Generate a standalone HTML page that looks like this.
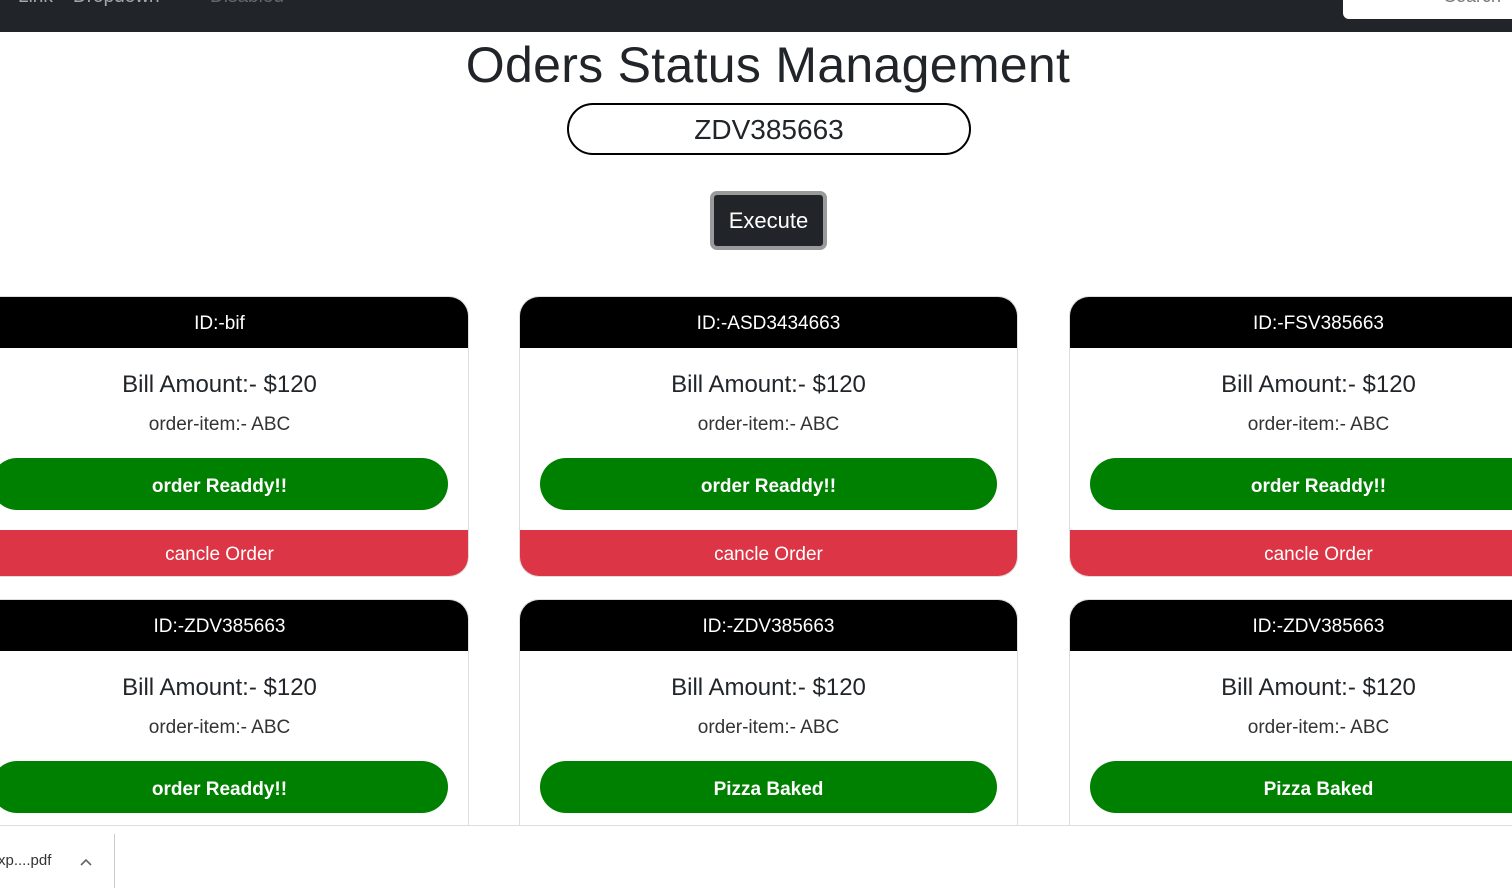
<!DOCTYPE html>
<html><head><style>
body{margin:0;width:1512px;height:887px;overflow:hidden;position:relative;font-family:"Liberation Sans",sans-serif;background:#fff;color:#212529}
.nav{position:absolute;left:0;top:0;width:1512px;height:32px;background:#212529}
.nav span{position:absolute;top:-14px;font-size:19px;color:rgba(255,255,255,.6)}
.search{position:absolute;left:1343px;top:-10px;width:180px;height:29px;background:#fff;border-radius:6px}
.search span{position:absolute;right:22px;top:-4px;color:#777;font-size:18px}
h1{position:absolute;left:0;width:1536px;top:36px;margin:0;text-align:center;font-size:50px;font-weight:500;letter-spacing:.3px}
.inp{position:absolute;left:567px;top:103px;width:400px;height:48px;border:2px solid #000;border-radius:26px;text-align:center;font-size:28px;line-height:50px}
.btn{position:absolute;left:710px;top:191px;width:109px;height:51px;background:#212529;border:4px solid #9a9a9a;border-radius:7px;color:#fff;text-align:center;font-size:22px;line-height:51px}
.card{position:absolute;width:497px;border:1px solid #ddd;border-radius:20px;overflow:hidden;background:#fff;height:279px}
.hd{height:51px;background:#000;color:#fff;text-align:center;font-size:19px;line-height:54px}
.bill{position:absolute;top:74px;width:100%;text-align:center;font-size:24px}
.item{position:absolute;top:117px;width:100%;text-align:center;font-size:19px;color:#333}
.g{position:absolute;left:20px;right:20px;top:161px;height:52px;background:#008000;border-radius:26px;color:#fff;font-weight:bold;font-size:19px;text-align:center;line-height:58px}
.r{position:absolute;left:0;right:0;top:233px;height:47px;background:#dc3545;color:#fff;font-size:19px;text-align:center;line-height:49px}
.bar{position:absolute;left:0;top:825px;width:1512px;height:62px;background:#fff;border-top:1px solid #ddd}
</style></head><body>
<div class="nav"><span style="left:18px">Link</span><span style="left:73px">Dropdown</span><span style="left:210px;color:rgba(255,255,255,.3)">Disabled</span>
<div class="search"><span>Search</span></div></div>
<h1>Oders Status Management</h1>
<div class="inp">ZDV385663</div>
<div class="btn">Execute</div>

<div class="card" style="left:-30px;top:296px"><div class="hd">ID:-bif</div><div class="bill">Bill Amount:- $120</div><div class="item">order-item:- ABC</div><div class="g">order Readdy!!</div><div class="r">cancle Order</div></div>
<div class="card" style="left:519px;top:296px"><div class="hd">ID:-ASD3434663</div><div class="bill">Bill Amount:- $120</div><div class="item">order-item:- ABC</div><div class="g">order Readdy!!</div><div class="r">cancle Order</div></div>
<div class="card" style="left:1069px;top:296px"><div class="hd">ID:-FSV385663</div><div class="bill">Bill Amount:- $120</div><div class="item">order-item:- ABC</div><div class="g">order Readdy!!</div><div class="r">cancle Order</div></div>

<div class="card" style="left:-30px;top:599px"><div class="hd">ID:-ZDV385663</div><div class="bill">Bill Amount:- $120</div><div class="item">order-item:- ABC</div><div class="g">order Readdy!!</div><div class="r">cancle Order</div></div>
<div class="card" style="left:519px;top:599px"><div class="hd">ID:-ZDV385663</div><div class="bill">Bill Amount:- $120</div><div class="item">order-item:- ABC</div><div class="g">Pizza Baked</div><div class="r">cancle Order</div></div>
<div class="card" style="left:1069px;top:599px"><div class="hd">ID:-ZDV385663</div><div class="bill">Bill Amount:- $120</div><div class="item">order-item:- ABC</div><div class="g">Pizza Baked</div><div class="r">cancle Order</div></div>

<div class="bar">
<span style="position:absolute;left:-2px;top:26px;font-size:15px;color:#333">xp....pdf</span>
<svg style="position:absolute;left:79px;top:31px" width="14" height="10"><path d="M2 8 L7 3 L12 8" stroke="#666" stroke-width="1.6" fill="none"/></svg>
<div style="position:absolute;left:114px;top:8px;width:1px;height:54px;background:#ccc"></div>
</div>
</body></html>
